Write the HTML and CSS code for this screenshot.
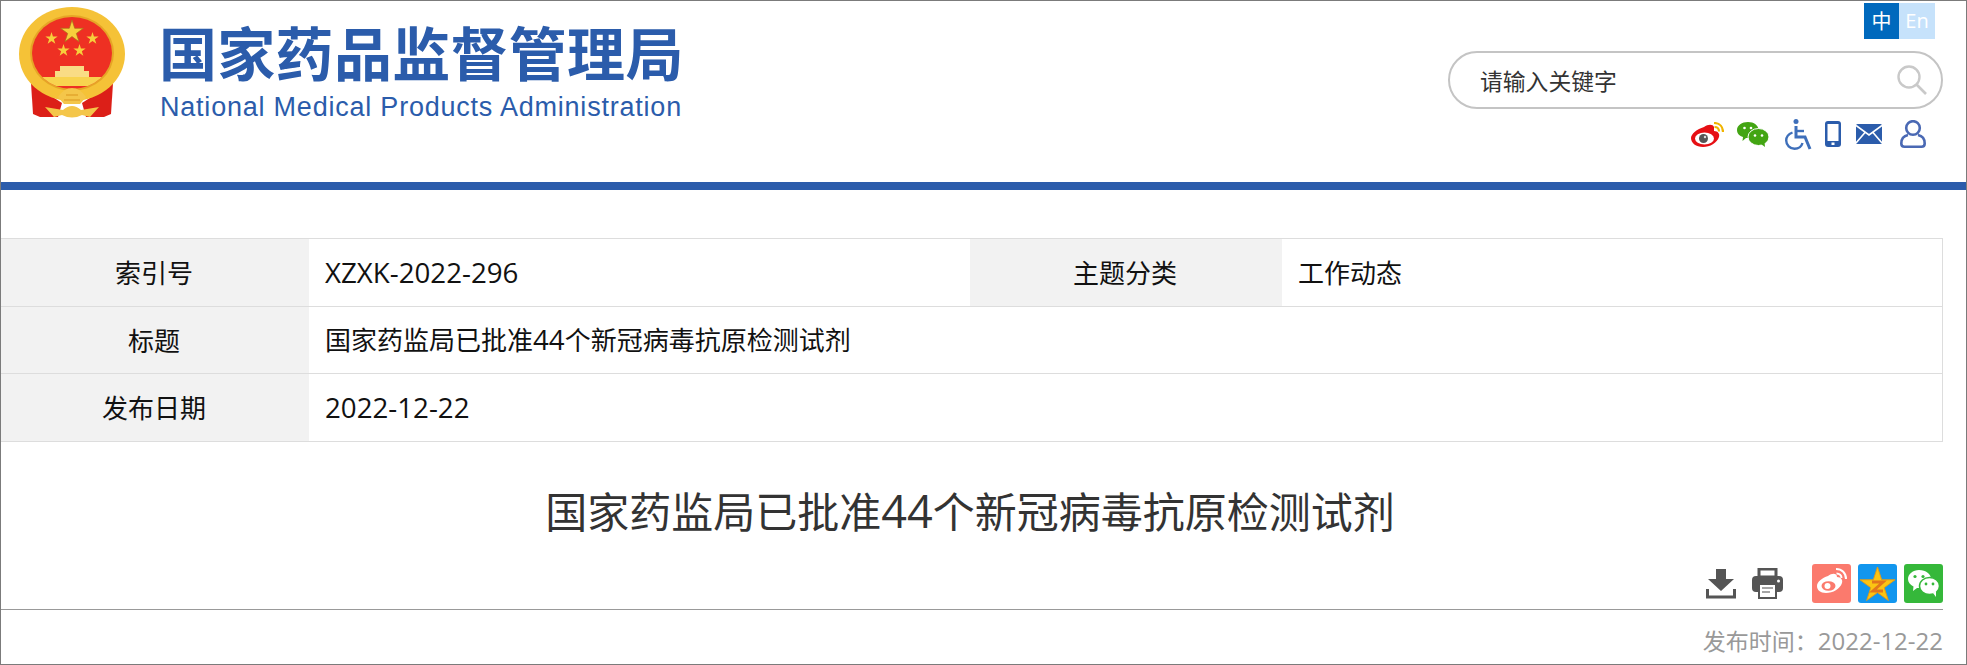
FILE: index.html
```html
<!DOCTYPE html>
<html lang="zh-cmn-Hans">
	<head>
		<meta charset="utf-8">
		<title>国家药监局已批准44个新冠病毒抗原检测试剂</title>
		<link rel="stylesheet" href="styles.css">
	</head>
	<body>
		<svg class="defs" width="0" height="0">
			<symbol id="star" viewBox="-1 -1 2 2"><polygon points="0,-1 .225,-.309 .951,-.309 .363,.118 .588,.809 0,.382 -.588,.809 -.363,.118 -.951,-.309 -.225,-.309"/></symbol>
			<clipPath id="shield"><ellipse cx="54" cy="46" rx="40" ry="36"/></clipPath>
		</svg>
		<div class="frame">
			<div class="header">
				<div class="logo">
					<svg class="emblem" viewBox="0 0 108 112" width="108" height="112">
						<path d="M13 76 L44 96 L40 110 L22 110 L15 107 Z" fill="#dc1f18"/>
						<path d="M95 76 L64 96 L68 110 L86 110 L93 107 Z" fill="#dc1f18"/>
						<ellipse cx="54" cy="47" rx="53" ry="47" fill="#f5c237"/>
						<ellipse cx="54" cy="46" rx="42" ry="38" fill="#e6a526"/>
						<ellipse cx="54" cy="46" rx="40" ry="36" fill="#ee3023"/>
						<g clip-path="url(#shield)">
							<rect x="10" y="70" width="88" height="9" fill="#f8d34f"/>
							<path d="M37 70 L37 64 L42 64 L42 59 L66 59 L66 64 L71 64 L71 70 Z" fill="#f9dc85"/>
						</g>
						<use href="#star" x="42" y="13" width="24" height="24" fill="#f7cf3c" stroke="#a8701a" stroke-width=".06"/>
						<use href="#star" x="27" y="25" width="13" height="13" fill="#f7cf3c"/>
						<use href="#star" x="68" y="25" width="13" height="13" fill="#f7cf3c"/>
						<use href="#star" x="39" y="37" width="13" height="13" fill="#f7cf3c"/>
						<use href="#star" x="55" y="37" width="13" height="13" fill="#f7cf3c"/>
						<path d="M40 90 Q46 81 54 81 Q62 81 68 90 L62 97 L46 97 Z" fill="#f4c64a"/>
						<path d="M46 93 L62 93 M48 88 L60 88" stroke="#d9951f" stroke-width="1.200"/>
						<path d="M27 100 L45 103 Q54 95 63 103 L81 100 L72 110 L64 108 Q54 113 44 108 L36 110 Z" fill="#f4c64a"/>
					</svg>
					<div class="logo-text">
						<div class="logo-cn">国家药品监督管理局</div>
						<div class="logo-en">National Medical Products Administration</div>
					</div>
				</div>
				<div class="head-right">
					<div class="lang">
						<a class="lang-cn">中</a><a class="lang-en">En</a>
					</div>
					<div class="search">
						<span>请输入关键字</span>
						<svg viewBox="0 0 30 30" width="30" height="30" fill="none" stroke="#c9c9c9">
							<circle cx="12" cy="12" r="10.5" stroke-width="2.4"/>
							<path d="M19.5 19.5 L29 29" stroke-width="2.6"/>
						</svg>
					</div>
					<div class="head-icons">
						<svg class="ic-weibo" viewBox="0 0 33 25" width="33" height="25">
							<path d="M13 5 C17 2 22 2 23 5 C23 7 23 8 23 9 C27 9 29 12 28 15 C26 21 19 25 12 25 C5 25 0 21 0 16 C0 12 6 7 13 5 Z" fill="#e60f14"/>
							<ellipse cx="13.500" cy="16.500" rx="9.500" ry="6" fill="#fff"/>
							<circle cx="12.500" cy="16.500" r="4.500" fill="#555"/>
							<circle cx="14" cy="15" r="1.200" fill="#ddd"/>
							<path d="M23 1 C29 1 32 5 32 10 M23.500 5 C26.500 5 28 7 28 9.500" fill="none" stroke="#f0b400" stroke-width="2.200"/>
						</svg>
						<svg class="ic-wechat" viewBox="0 0 32 25" width="32" height="25">
							<path d="M11 0 C17 0 21.500 3.500 21.500 8 C21.500 12.500 17 16 11 16 L9 16 L5.500 19 L6 15 C2.500 14 0 11.500 0 8 C0 3.500 5 0 11 0 Z" fill="#43a513"/>
							<ellipse cx="21.500" cy="15" rx="10.500" ry="8.500" fill="#43a513" stroke="#fff" stroke-width="1"/>
							<path d="M24 22 L28 25 L27.500 20 Z" fill="#43a513"/>
							<circle cx="7.500" cy="6" r="1.300" fill="#fff"/><circle cx="14" cy="6" r="1.300" fill="#fff"/>
							<circle cx="18" cy="13.500" r="1.300" fill="#fff"/><circle cx="25" cy="13.500" r="1.300" fill="#fff"/>
						</svg>
						<svg class="ic-access" viewBox="0 0 27 31" width="27" height="31" fill="none" stroke="#3e6fba" stroke-width="2.400">
							<circle cx="11" cy="2.500" r="2.500" fill="#3e6fba" stroke="none"/>
							<path d="M11 7 L11 18 L20 18 L25 30" stroke-width="3"/>
							<path d="M11 12 L19 12"/>
							<path d="M7.500 13.500 C3.500 15 1.200 18 1.200 21.500 C1.200 26 5 29.800 9.500 29.800 C13.500 29.800 16.500 27.500 17.500 24"/>
						</svg>
						<svg class="ic-phone" viewBox="0 0 16 26" width="16" height="26">
							<rect x="0" y="0" width="16" height="26" rx="3" fill="#2b5cab"/>
							<rect x="2.500" y="3" width="11" height="17" fill="#fff"/>
							<rect x="6.500" y="21.500" width="3" height="2.500" fill="#fff"/>
						</svg>
						<svg class="ic-mail" viewBox="0 0 26 20" width="26" height="20">
							<rect width="26" height="20" rx="1.500" fill="#2b5cab"/>
							<path d="M0 1.500 L13 11 L26 1.500 M0 19 L9 8.500 M26 19 L17 8.500" fill="none" stroke="#fff" stroke-width="1.600"/>
						</svg>
						<svg class="ic-user" viewBox="0 0 26 28" width="26" height="28" fill="none" stroke="#4a69b4" stroke-width="2.600">
							<circle cx="13" cy="8" r="6.800"/>
							<path d="M8 15 C3 16 1.300 20 1.300 23.500 C1.300 25.800 2.500 26.700 4.500 26.700 L21.500 26.700 C23.500 26.700 24.700 25.800 24.700 23.500 C24.700 20 23 16 18 15"/>
						</svg>
					</div>
				</div>
			</div>
			<div class="bar"></div>

			<table class="info">
				<tr>
					<th class="col-a">索引号</th>
					<td class="col-b"><span class="num">XZXK-2022-296</span></td>
					<th class="col-c">主题分类</th>
					<td>工作动态</td>
				</tr>
				<tr class="row-mid">
					<th>标题</th>
					<td colspan="3">国家药监局已批准<span class="num">44</span>个新冠病毒抗原检测试剂</td>
				</tr>
				<tr>
					<th>发布日期</th>
					<td colspan="3"><span class="num">2022-12-22</span></td>
				</tr>
			</table>

			<h1 class="title">国家药监局已批准<span class="title-num">44</span>个新冠病毒抗原检测试剂</h1>

			<div class="tools">
				<svg class="t-down" viewBox="0 0 30 30" width="30" height="30" fill="#555">
					<path d="M10 0 L20 0 L20 10 L28 10 L15 22 L2 10 L10 10 Z"/>
					<path d="M1.500 20 L1.500 28 L28.500 28 L28.500 20" fill="none" stroke="#555" stroke-width="3"/>
				</svg>
				<svg class="t-print" viewBox="0 0 31 31" width="31" height="31">
					<path d="M7 1 L24 1 L24 9 L7 9 Z" fill="none" stroke="#555" stroke-width="3"/>
					<rect x="0" y="8" width="31" height="16" rx="4" fill="#555"/>
					<rect x="7" y="16" width="17" height="14" fill="#fff" stroke="#555" stroke-width="2"/>
					<path d="M10 20 L21 20 M10 24 L18 24" stroke="#888" stroke-width="1.500"/>
					<circle cx="26.500" cy="13" r="1.500" fill="#fff"/>
				</svg>
				<svg class="t-share t-first" viewBox="0 0 39 39" width="39" height="39">
					<rect width="39" height="39" rx="3" fill="#fb7a6d"/>
					<path d="M16 12 C20 9 25 9 25 13 C29 13 31 16 30 19 C28 25 21 29 14 29 C8 29 5 26 5 22 C5 18 10 14 16 12 Z" fill="#fff"/>
					<ellipse cx="16.500" cy="22" rx="7" ry="4.800" fill="#fb7a6d"/>
					<circle cx="15.500" cy="22" r="3" fill="#fff"/>
					<path d="M24 5 C30 5 34 9 34 15 M24.500 9.500 C27.500 9.500 29.500 11.500 29.500 14" fill="none" stroke="#fff" stroke-width="2"/>
				</svg>
				<svg class="t-share" viewBox="0 0 39 39" width="39" height="39">
					<rect width="39" height="39" rx="3" fill="#1296ee"/>
					<use href="#star" x="1" y="3" width="37" height="37" fill="#fbc413" stroke="#e89a10" stroke-width=".05"/>
					<path d="M14 18 L25 18 L15 27 L25 27" fill="none" stroke="#e2761b" stroke-width="3"/>
				</svg>
				<svg class="t-share" viewBox="0 0 39 39" width="39" height="39">
					<rect width="39" height="39" rx="3" fill="#35b83a"/>
					<path d="M15 6 C22 6 27 10 27 15 C27 20 22 24 15 24 L13 24 L9 27 L9.500 22.500 C6 21 4 18 4 15 C4 10 9 6 15 6 Z" fill="#fff"/>
					<ellipse cx="25.500" cy="22" rx="10" ry="8.500" fill="#fff" stroke="#35b83a" stroke-width="1.500"/>
					<path d="M29 29 L32 33 L32 27 Z" fill="#fff"/>
					<circle cx="11" cy="12.500" r="1.600" fill="#35b83a"/><circle cx="19" cy="12.500" r="1.600" fill="#35b83a"/>
					<circle cx="22" cy="20" r="1.400" fill="#35b83a"/><circle cx="29" cy="20" r="1.400" fill="#35b83a"/>
				</svg>
			</div>
			<div class="pubdate">发布时间：<span class="date-num">2022-12-22</span></div>
		</div>
	</body>
</html>
```

FILE: styles.css
```css
html,body{ margin: 0; padding: 0; background: #fff; }
body{ width: 1967px; height: 665px; overflow: hidden; font-family: "Open Sans", "Noto Sans CJK SC", sans-serif; color: #111; }
.defs{ position: absolute; }
a{ display: block; }
.frame{ box-sizing: border-box; width: 1967px; height: 665px; border: 1px solid #7b7b7b; overflow: hidden; }

/* header */
.header{ display: flex; justify-content: space-between; height: 181px; }
.logo{ display: flex; align-items: flex-start; padding: 6px 0 0 17px; }
.logo-text{ margin: 12px 0 0 33px; color: #2b5cab; }
.logo-cn{ font-family: "Noto Sans CJK SC", sans-serif; font-weight: 700; font-size: 58px; line-height: 64px; letter-spacing: .3px; }
.logo-en{ font-family: "Liberation Sans", sans-serif; font-size: 27px; line-height: 32px; margin: 8px 0 0 1px; letter-spacing: .78px; white-space: nowrap; }
.head-right{ display: flex; flex-direction: column; align-items: flex-end; padding: 2px 23px 0 0; }
.lang{ display: flex; margin-right: 8px; font-size: 20px; line-height: 36px; color: #fff; text-align: center; }
.lang-cn{ width: 35px; background: #0069bd; font-family: "Noto Sans CJK SC", sans-serif; }
.lang-en{ width: 36px; background: #c6e2fb; }
.search{ box-sizing: border-box; display: flex; justify-content: space-between; align-items: center; width: 495px; height: 58px; margin-top: 12px; padding: 0 14px 0 30px; border: 2px solid #c4c4c4; border-radius: 29px; font-family: "Noto Sans CJK SC", sans-serif; font-size: 22.8px; color: #333; }
.head-icons{ display: flex; align-items: center; height: 32px; margin: 9px 17px 0 0; }
.ic-wechat{ margin-left: 13px; }
.ic-access{ margin-left: 16px; }
.ic-phone{ margin-left: 13px; }
.ic-mail{ margin-left: 15px; }
.ic-user{ margin-left: 18px; }
.bar{ height: 8px; background: #2b5cab; }

/* info table */
.info{ width: 1942px; margin-top: 48px; border-collapse: collapse; border-top: 1px solid #ddd; table-layout: fixed; }
.info th,.info td{ height: 68px; padding: 0 0 2px; border-bottom: 1px solid #ddd; box-sizing: border-box; font-size: 26px; }
.row-mid th,.row-mid td{ height: 67px; }
.info th{ padding-right: 2px; background: #f2f2f2; font-family: "Noto Sans CJK SC", sans-serif; font-weight: 400; text-align: center; }
.info td{ padding-left: 16px; }
.info td:last-child{ border-right: 1px solid #ddd; }
.num{ font-size: 27.7px; }
.col-a{ width: 308px; }
.col-b{ width: 661px; }
.col-c{ width: 312px; }

.title{ width: 1938px; margin: 36px 0 0; font-size: 42px; line-height: 66px; font-weight: 400; text-align: center; color: #333; }
.title-num{ font-size: 45px; }

/* share row */
.tools{ display: flex; justify-content: flex-end; align-items: center; width: 1942px; height: 39px; margin-top: 19px; padding-bottom: 6px; border-bottom: 1px solid #999; }
.t-print{ margin-left: 16px; }
.t-share{ margin-left: 7px; }
.t-first{ margin-left: 29px; }
.pubdate{ width: 1942px; margin-top: 16px; font-size: 23px; line-height: 30px; color: #999; text-align: right; }
.date-num{ font-size: 24px; }
```
